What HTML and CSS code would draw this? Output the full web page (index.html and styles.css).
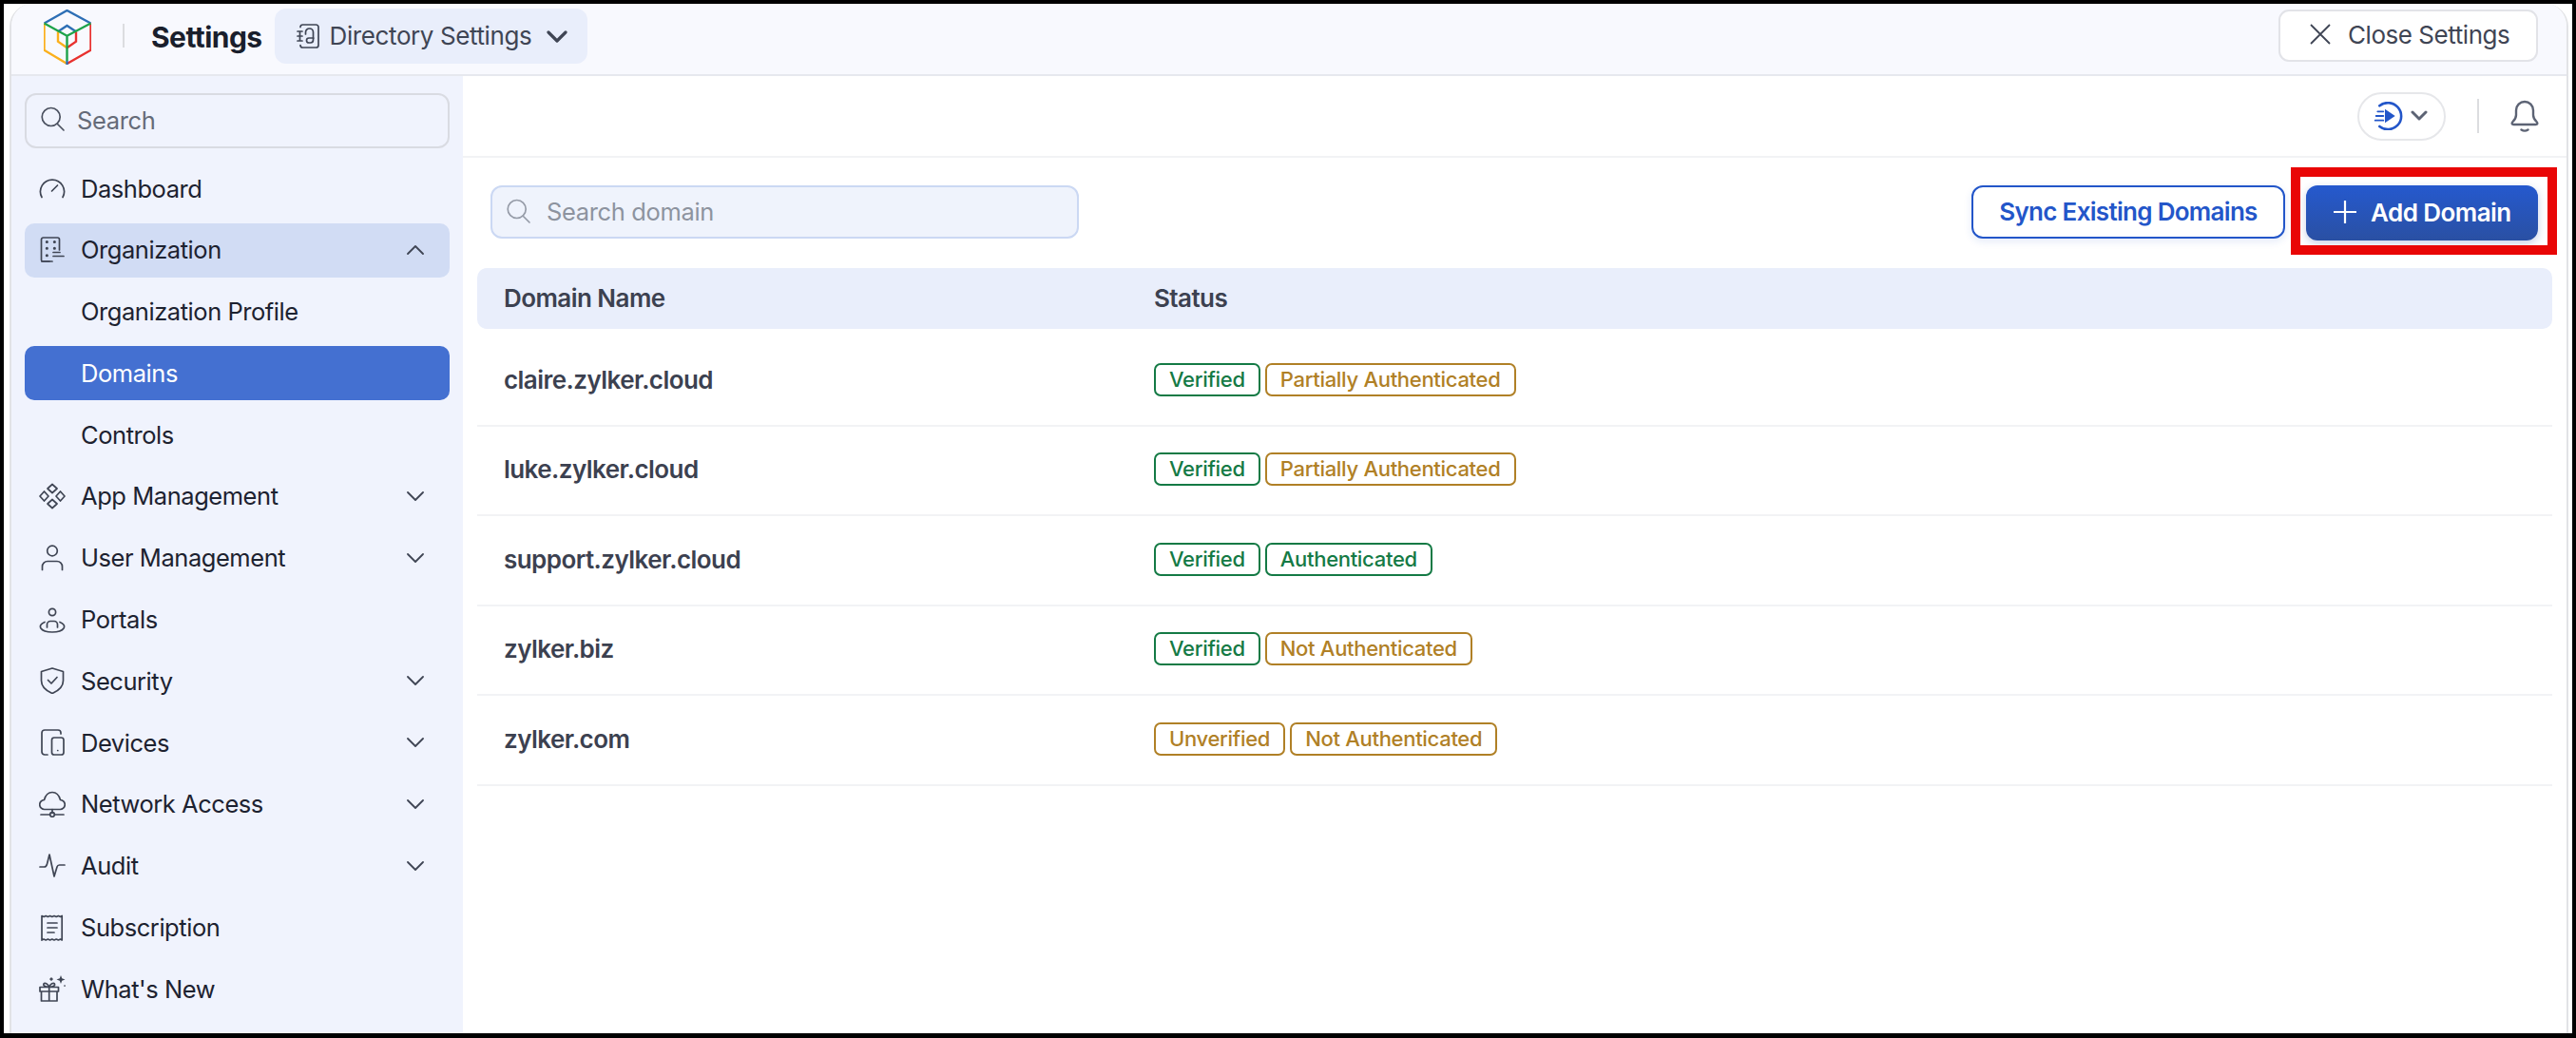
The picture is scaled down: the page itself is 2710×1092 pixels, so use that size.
FILE: index.html
```html
<!DOCTYPE html>
<html lang="en">
<head>
<meta charset="utf-8">
<title>Directory Settings - Domains</title>
<link rel="stylesheet" href="styles.css">
</head>
<body>
<div class="screen">
<div class="app">

	<header class="topbar">
		<svg class="logo" width="50" height="58" viewBox="0 0 50 58" fill="none" stroke-width="2.4">
			<path d="M.5 14.5 24.5 1 49.5 14.5" stroke="#2d6fb5"/>
			<path d="M.5 14.5V42.7L24.5 57" stroke="#fbb01c"/>
			<path d="M49.5 14.5V42.7L24.5 57" stroke="#e8312f"/>
			<path d="M15 23.3 24.5 17 34 23.3" stroke="#2d6fb5"/>
			<path d="M15 23.3V33.7L24.5 40.3" stroke="#fbb01c"/>
			<path d="M34 23.3V33.7L24.5 40.3" stroke="#e8312f"/>
			<path d="M.5 14.5 24.5 27.7 49.5 14.5M24.5 27.7V54" stroke="#1ea34a"/>
			<path d="M24.5 54V58" stroke="#2d6fb5"/>
		</svg>
		<span class="topbar-sep"></span>
		<span class="topbar-title">Settings</span>
		<button class="dir-switch">
			<svg width="24" height="26" viewBox="0 0 24 26" fill="none" stroke="#3f4554" stroke-width="1.7" stroke-linecap="round">
				<path d="M4 3.500V3.300A2.500 2.500 0 0 1 6.500 1h14a2.500 2.500 0 0 1 2.500 2.500v19a2.500 2.500 0 0 1-2.500 2.500h-14A2.500 2.500 0 0 1 4 22.500"/>
				<path d="M1 8h5M1 13h5M1 18h5M3.500 9v3M3.500 14v3"/>
				<path d="M9.500 11V9a4 4 0 0 1 8 0v8a3 3 0 0 1-3 3h-1.500a2.500 2.500 0 0 1 0-5H18"/>
			</svg>
			<span>Directory Settings</span>
			<svg width="22" height="14" viewBox="0 0 22 14" fill="none" stroke="#3f4554" stroke-width="3.200" stroke-linecap="round" stroke-linejoin="round"><path d="M2 3l9 9 9-9"/></svg>
		</button>
		<button class="close-btn">
			<svg width="22" height="22" viewBox="0 0 22 22" fill="none" stroke="#3f4554" stroke-width="1.800"><path d="M1 1l20 20M21 1 1 21"/></svg>
			<span>Close Settings</span>
		</button>
	</header>

	<div class="body">
		<aside class="sidebar">
			<div class="side-search">
				<svg width="28" height="28" viewBox="0 0 28 28" fill="none" stroke="#4b5160" stroke-width="1.700" stroke-linecap="round"><circle cx="11.700" cy="11" r="9.500"/><path d="M18.500 18.500 25 25"/></svg>
				<span>Search</span>
			</div>
			<nav class="nav">
				<a class="nav-item">
					<svg class="nav-icon" viewBox="0 0 28 28"><path d="M3 23.500a12.500 12.500 0 1 1 22 0"/><path d="M13.500 17 19.500 11"/></svg>
					<span>Dashboard</span>
				</a>
				<a class="nav-item open">
					<svg class="nav-icon" viewBox="0 0 28 28"><path d="M11 26H4a1.500 1.500 0 0 1-1.500-1.500V3A2 2 0 0 1 4.500 1h15a2 2 0 0 1 2 2v11"/><path d="M3 26h11M15 16.500h7M15 20.500h11"/><path class="dots" d="M8.300 5.500h.1M16.300 5.500h.1M8.300 12.200h.1M16.300 12.200h.1M8.300 19.800h.1"/></svg>
					<span>Organization</span>
					<svg class="chev" viewBox="0 0 18 10"><path d="M1 9l8-8 8 8"/></svg>
				</a>
				<a class="nav-item sub">Organization Profile</a>
				<a class="nav-item sub active">Domains</a>
				<a class="nav-item sub">Controls</a>
				<a class="nav-item">
					<svg class="nav-icon" viewBox="0 0 28 28"><path d="M14 1.500 19 6 14 10.500 9 6ZM22.500 9 27 14 22.500 19 18 14ZM5.500 9 10 14 5.500 19 1 14ZM14 17.500 19 22 14 26.500 9 22Z"/></svg>
					<span>App Management</span>
					<svg class="chev" viewBox="0 0 18 10"><path d="M1 1l8 8 8-8"/></svg>
				</a>
				<a class="nav-item">
					<svg class="nav-icon" viewBox="0 0 28 28"><circle cx="14" cy="6.500" r="5.300"/><path d="M3.500 26.500v-3.500a5.500 5.500 0 0 1 5.500-5.500h10a5.500 5.500 0 0 1 5.500 5.500v3.500"/></svg>
					<span>User Management</span>
					<svg class="chev" viewBox="0 0 18 10"><path d="M1 1l8 8 8-8"/></svg>
				</a>
				<a class="nav-item">
					<svg class="nav-icon" viewBox="0 0 28 28"><circle cx="14" cy="6" r="3.600"/><path d="M6 16.500C2 18 .5 20.500 2 23c2 3 7 4 12 4s10-1 12-4c1.500-2.500 0-5-4-6.500"/><path d="M8.500 22v-3a3.500 3.500 0 0 1 3.500-3.500h4a3.500 3.500 0 0 1 3.500 3.500v3"/></svg>
					<span>Portals</span>
				</a>
				<a class="nav-item">
					<svg class="nav-icon" viewBox="0 0 28 28"><path d="M14 1 25.500 4.500V14c0 6.500-4.500 10.500-11.500 13.500C7 24.500 2.500 20.500 2.500 14V4.500Z"/><path d="M9.500 13.500l3.500 3.500 6-6.500"/></svg>
					<span>Security</span>
					<svg class="chev" viewBox="0 0 18 10"><path d="M1 1l8 8 8-8"/></svg>
				</a>
				<a class="nav-item">
					<svg class="nav-icon" viewBox="0 0 28 28"><path d="M9 27H6a3 3 0 0 1-3-3V4a3 3 0 0 1 3-3h14a3 3 0 0 1 3 3v1"/><rect x="13.500" y="9" width="12.500" height="18" rx="2.500"/><path d="M19.700 22.500h.1"/></svg>
					<span>Devices</span>
					<svg class="chev" viewBox="0 0 18 10"><path d="M1 1l8 8 8-8"/></svg>
				</a>
				<a class="nav-item">
					<svg class="nav-icon" viewBox="0 0 28 28"><path d="M7 19.500H6a5 5 0 0 1-.5-10C7 4 10 1.500 14 1.500S21 4 22.500 9.500a5 5 0 0 1-.5 10Z"/><path d="M14 19.500v4M2 25h9.500M16.500 25H26"/><circle cx="14" cy="25" r="2.300"/></svg>
					<span>Network Access</span>
					<svg class="chev" viewBox="0 0 18 10"><path d="M1 1l8 8 8-8"/></svg>
				</a>
				<a class="nav-item">
					<svg class="nav-icon" viewBox="0 0 28 28"><path d="M1 15h4.500c2 0 2.500-1 3-3L11 2l5 23 3-10c.5-1.500 1-2 2.500-2H27"/></svg>
					<span>Audit</span>
					<svg class="chev" viewBox="0 0 18 10"><path d="M1 1l8 8 8-8"/></svg>
				</a>
				<a class="nav-item">
					<svg class="nav-icon" viewBox="0 0 28 28"><path d="M3 1.500l2.200 1 2-1 2.200 1 2.200-1 2.200 1 2.200-1 2.200 1 2.200-1 2.200 1 1.600-1V27l-1.600-1-2.200 1-2.200-1-2.200 1-2.200-1-2.200 1-2.200-1-2.200 1-2.200-1L3 27Z"/><path d="M9 9h10M9 14h10M9 19h7"/></svg>
					<span>Subscription</span>
				</a>
				<a class="nav-item">
					<svg class="nav-icon" viewBox="0 0 28 28"><path d="M1 12.500h19.500v4.500H1ZM2.500 17v10H19V17M10.700 12.500V27M10.700 12.500C6 12.500 4 10.500 5 9s4.500-.5 5.700 3.500c1.200-4 4.700-5 5.700-3.500s-1 3.500-5.700 3.500"/><path class="fill" d="M23 0l1.200 3.300L27.500 4.500l-3.300 1.200L23 9l-1.200-3.300L18.500 4.500l3.300-1.200Z"/><path d="M13 3v2M12 4h2M27 11h.1"/></svg>
					<span>What's New</span>
				</a>
			</nav>
		</aside>

		<main class="main">
			<div class="toolbar">
				<button class="guide-pill">
					<svg width="32" height="30" viewBox="0 0 32 30" fill="none" stroke="#2356c9" stroke-width="2.600" stroke-linecap="round">
						<path d="M7.300 4.300A14 14 0 1 1 7.300 26"/>
						<path d="M5.300 10.300h6M3.700 15h7.600M2.700 19.700h8.600" stroke-width="1.800"/>
						<path d="M13 7.700V22.300L23.700 15Z" fill="#2356c9" stroke="none"/>
					</svg>
					<svg width="18" height="12" viewBox="0 0 18 12" fill="none" stroke="#5c6374" stroke-width="3" stroke-linecap="round" stroke-linejoin="round"><path d="M2 2l7 7 7-7"/></svg>
				</button>
				<span class="toolbar-sep"></span>
				<svg width="30" height="34" viewBox="0 0 30 34" fill="none" stroke="#5c6374" stroke-width="2.400" stroke-linecap="round" stroke-linejoin="round">
					<path d="M6 16V11a9 9 0 0 1 18 0v5c0 3 1.500 5 3.500 7 1.500 1.500 1 3-1 3H3.500c-2 0-2.500-1.500-1-3C4.500 21 6 19 6 16Z"/>
					<path d="M11.500 31.500c2 1.300 5 1.300 7 0"/>
				</svg>
			</div>

			<div class="actions">
				<div class="domain-search">
					<svg width="28" height="28" viewBox="0 0 28 28" fill="none" stroke="#969ca8" stroke-width="1.700" stroke-linecap="round"><circle cx="11.700" cy="11" r="9.500"/><path d="M18.500 18.500 25 25"/></svg>
					<span>Search domain</span>
				</div>
				<button class="btn-outline">Sync Existing Domains</button>
				<div class="add-wrap">
					<button class="btn-primary">
						<svg width="24" height="24" viewBox="0 0 24 24" fill="none" stroke="#fff" stroke-width="2.200"><path d="M12 0v24M0 12h24"/></svg>
						<span>Add Domain</span>
					</button>
					<span class="callout"></span>
				</div>
			</div>

			<div class="table">
				<div class="table-head">
					<div class="col-name">Domain Name</div>
					<div>Status</div>
				</div>
				<div class="table-row">
					<div class="col-name">claire.zylker.cloud</div>
					<div class="tags"><span class="tag ok">Verified</span><span class="tag warn">Partially Authenticated</span></div>
				</div>
				<div class="table-row">
					<div class="col-name">luke.zylker.cloud</div>
					<div class="tags"><span class="tag ok">Verified</span><span class="tag warn">Partially Authenticated</span></div>
				</div>
				<div class="table-row">
					<div class="col-name">support.zylker.cloud</div>
					<div class="tags"><span class="tag ok">Verified</span><span class="tag ok">Authenticated</span></div>
				</div>
				<div class="table-row">
					<div class="col-name">zylker.biz</div>
					<div class="tags"><span class="tag ok">Verified</span><span class="tag warn">Not Authenticated</span></div>
				</div>
				<div class="table-row">
					<div class="col-name">zylker.com</div>
					<div class="tags"><span class="tag warn">Unverified</span><span class="tag warn">Not Authenticated</span></div>
				</div>
			</div>
		</main>
	</div>

</div>
</div>
</body>
</html>
```

FILE: styles.css
```css
* {
	box-sizing: border-box;
}

html, body {
	height: 100%;
}

body {
	margin: 0;
	background: #000;
	font-family: "Inter", "Liberation Sans", sans-serif;
	color: #1d2230;
	overflow: hidden;
}

button {
	font-family: inherit;
	cursor: pointer;
}

.screen {
	height: 1083px;
	margin: 4px 4px 5px 4px;
	padding: 0 4px 0 6px;
	background: #fff;
}

.app {
	height: 100%;
	display: flex;
	flex-direction: column;
	border-left: 2px solid #e2e3e6;
	border-right: 2px solid #e2e3e6;
	border-radius: 24px 24px 0 0;
	overflow: hidden;
}

/* top bar */
.topbar {
	flex: none;
	height: 76px;
	display: flex;
	align-items: center;
	padding: 0 30px 7px 34px;
	background: #f8f9fe;
	border-bottom: 2px solid #e6e8ee;
}

.logo {
	flex: none;
	margin-top: 2px;
}

.topbar-sep {
	width: 2px;
	height: 25px;
	margin: 0 28px 0 33px;
	background: #dcdde0;
}

.topbar-title {
	margin-top: 2px;
	font-size: 30px;
	font-weight: 700;
	letter-spacing: -.55px;
	color: #1a1f2c;
}

.dir-switch {
	flex: none;
	height: 58px;
	width: 329px;
	margin-left: 13px;
	display: flex;
	align-items: center;
	gap: 11px;
	padding: 0 0 0 23px;
	background: #e9eefb;
	border: 0;
	border-radius: 12px;
	font-size: 26px;
	letter-spacing: -.4px;
	color: #3f4554;
}

.dir-switch svg:last-child {
	margin-left: 5px;
}

.close-btn {
	height: 55px;
	width: 273px;
	margin: -1px 0 0 auto;
	display: flex;
	align-items: center;
	gap: 18px;
	padding: 0 0 2px 31px;
	background: #fff;
	border: 2px solid #e2e3e8;
	border-radius: 11px;
	font-size: 26px;
	letter-spacing: -.45px;
	color: #3f4554;
}

/* left side */
.body {
	flex: 1;
	display: flex;
	min-height: 0;
}

.sidebar {
	flex: none;
	width: 475px;
	padding: 18px 14px 0;
	background: #f0f3fd;
}

.side-search {
	height: 58px;
	display: flex;
	align-items: center;
	gap: 11px;
	padding: 0 0 2px 14px;
	border: 2px solid #d9dbe2;
	border-radius: 12px;
	font-size: 25.500px;
	letter-spacing: -.35px;
	color: #656b78;
}

.nav {
	display: flex;
	flex-direction: column;
	gap: 7.800px;
	margin-top: 14px;
}

.nav-item {
	height: 57px;
	display: flex;
	align-items: center;
	gap: 16px;
	padding: 0 27px 1px 15px;
	border-radius: 10px;
	font-size: 25.500px;
	letter-spacing: -.45px;
}

.nav-item.sub {
	padding-left: 59px;
}

.nav-item.open {
	background: #d1dcf4;
}

.nav-item.active {
	background: #4470d1;
	color: #fff;
}

.nav-icon {
	flex: none;
	width: 28px;
	height: 28px;
	fill: none;
	stroke: #3f4554;
	stroke-width: 1.700;
	stroke-linecap: round;
	stroke-linejoin: round;
}

.nav-icon .dots {
	stroke-width: 3;
}

.nav-icon .fill {
	fill: #3f4554;
	stroke: none;
}

.chev {
	flex: none;
	width: 18px;
	height: 10px;
	margin-left: auto;
	fill: none;
	stroke: #3f4554;
	stroke-width: 1.800;
	stroke-linecap: round;
	stroke-linejoin: round;
}

/* main */
.main {
	flex: 1;
	min-width: 0;
	background: #fff;
}

.toolbar {
	height: 86px;
	display: flex;
	align-items: center;
	justify-content: flex-end;
	padding-right: 29px;
	border-bottom: 2px solid #f2f3f5;
}

.guide-pill {
	width: 93px;
	height: 51px;
	display: flex;
	align-items: center;
	gap: 8px;
	padding: 0 0 0 14px;
	background: #fff;
	border: 2px solid #e6e7ea;
	border-radius: 26px;
}

.toolbar-sep {
	width: 2px;
	height: 36px;
	margin: 0 33px;
	background: #dcdde0;
}

.actions {
	height: 116px;
	display: flex;
	align-items: flex-start;
	padding: 29px 30px 0 29px;
}

.domain-search {
	width: 619px;
	height: 56px;
	display: flex;
	align-items: center;
	gap: 15px;
	padding: 0 0 1px 14px;
	background: #eff3fc;
	border: 2px solid #cbd8f3;
	border-radius: 12px;
	font-size: 25.500px;
	letter-spacing: -.35px;
	color: #8d939f;
}

.btn-outline {
	width: 330px;
	height: 56px;
	margin-left: auto;
	padding: 0 0 2px;
	background: #fff;
	border: 2px solid #2356c9;
	border-radius: 12px;
	font-size: 26px;
	font-weight: 600;
	letter-spacing: -.7px;
	color: #2356c9;
	box-shadow: 0 3px 8px rgba(35, 86, 201, .12);
}

.add-wrap {
	position: relative;
	margin-left: 22px;
}

.btn-primary {
	width: 244px;
	height: 58px;
	display: flex;
	align-items: center;
	gap: 15px;
	padding: 0 0 2px 29px;
	background: linear-gradient(#2559ce, #2a50a3);
	border: 0;
	border-radius: 12px;
	font-size: 26px;
	font-weight: 600;
	letter-spacing: -.55px;
	color: #fff;
	box-shadow: 0 3px 8px rgba(35, 70, 160, .25);
}

/* red box drawn over the screenshot */
.callout {
	position: absolute;
	top: -19px;
	right: -20px;
	bottom: -15px;
	left: -16px;
	border: 10px solid #e90606;
	pointer-events: none;
}

.table {
	margin: 0 15px;
}

.table-head {
	height: 64px;
	display: flex;
	align-items: center;
	margin-bottom: 8px;
	padding-bottom: 2px;
	background: #e9eefb;
	border-radius: 10px;
	font-size: 26px;
	font-weight: 600;
	letter-spacing: -.55px;
	color: #3c4150;
}

.col-name {
	flex: none;
	width: 712px;
	padding-left: 28px;
}

.table-row {
	height: 94.500px;
	display: flex;
	align-items: center;
	padding-bottom: 2px;
	border-bottom: 2px solid #f2f3f5;
	font-size: 26px;
	font-weight: 600;
	letter-spacing: -.55px;
	color: #3c4150;
}

.tags {
	display: flex;
	gap: 5px;
}

.tag {
	height: 35px;
	display: flex;
	align-items: center;
	padding: 0 14px 1px;
	border: 2px solid;
	border-radius: 7px;
	font-size: 22px;
	font-weight: 500;
	letter-spacing: -.3px;
}

.tag.ok {
	color: #147a45;
	border-color: #147a45;
}

.tag.warn {
	color: #b08026;
	border-color: #b08026;
}
```
